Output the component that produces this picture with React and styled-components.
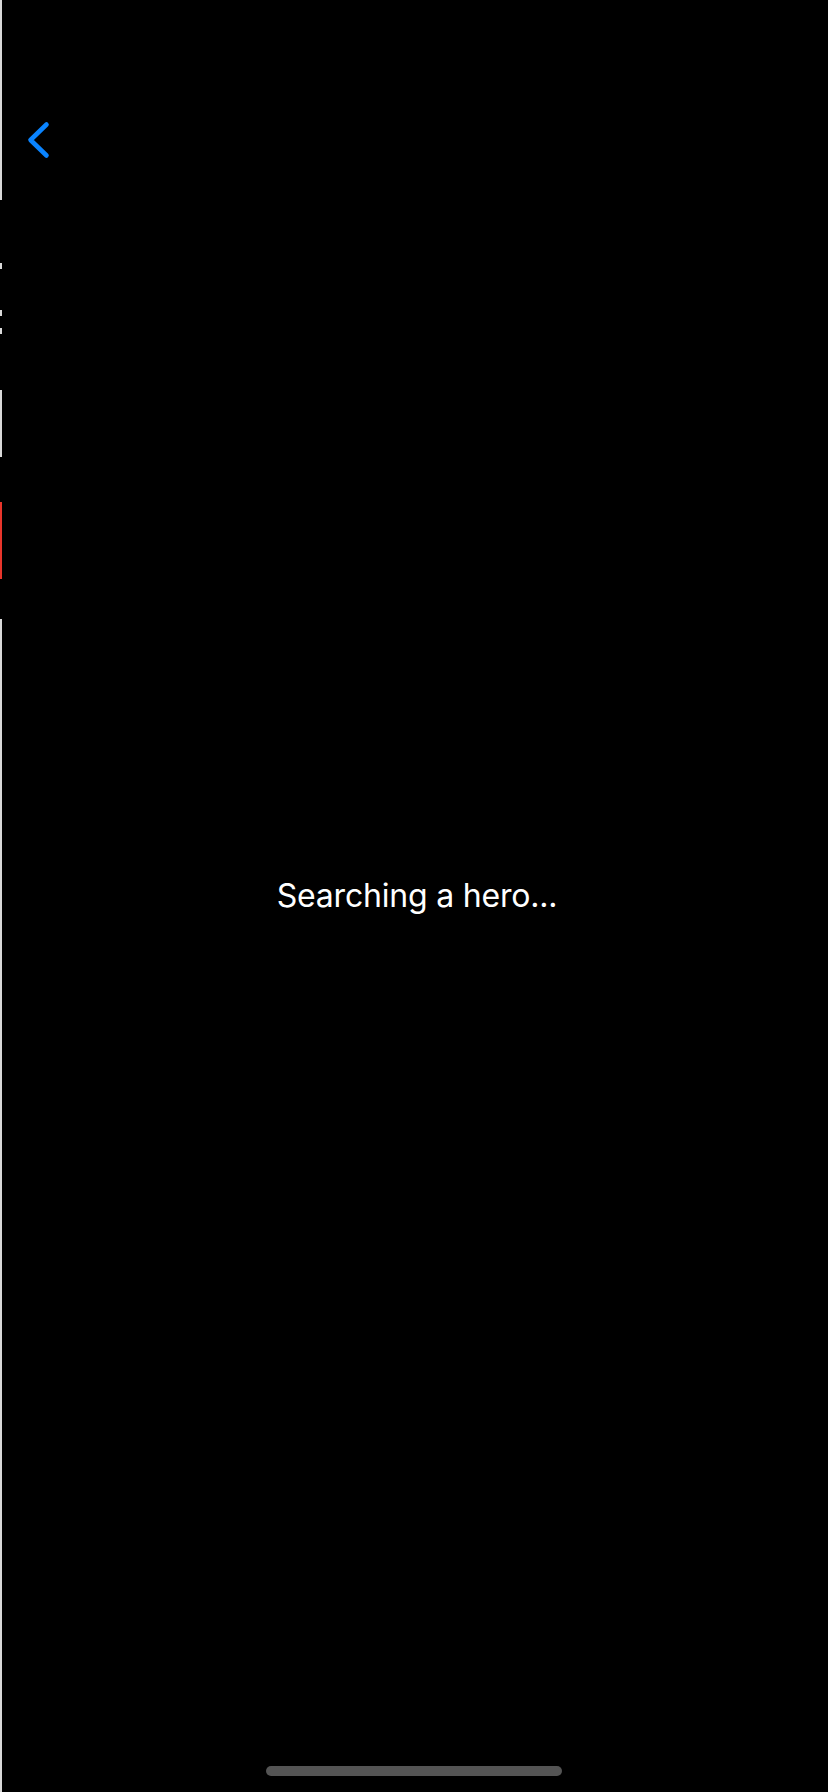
import React from "react";
import styled, { createGlobalStyle } from "styled-components";

const GlobalStyle = createGlobalStyle`
  html, body {
    margin: 0;
    padding: 0;
    background: #000;
  }
  #root {
    min-height: 1792px;
  }
`;

const Screen = styled.div`
  display: flex;
  flex-direction: row;
  width: 828px;
  height: 1792px;
  background: #000;
  overflow: hidden;
`;

const EdgeStrip = styled.div`
  display: flex;
  flex-direction: column;
  width: 2px;
  flex: 0 0 2px;
  height: 100%;
`;

const EdgeSegment = styled.div`
  flex: ${(p) => (p.$fill ? "1 1 auto" : `0 0 ${p.$h}px`)};
  background: ${(p) => p.$color};
`;

const Content = styled.div`
  flex: 1;
  display: grid;
  grid-template-rows: 176px 1fr 176px;
  min-width: 0;
`;

const NavBar = styled.div`
  display: flex;
  align-items: flex-start;
  padding-top: 120px;
  padding-left: 22px;
`;

const BackButton = styled.button`
  display: flex;
  align-items: center;
  justify-content: center;
  padding: 0;
  margin: 0;
  border: none;
  background: transparent;
  width: 28px;
  height: 40px;
  cursor: pointer;
`;

const Main = styled.main`
  display: flex;
  align-items: center;
  justify-content: center;
  margin-left: -2px;
`;

const Status = styled.p`
  margin: 0;
  color: #fff;
  font-family: Inter, "Noto Sans", "Liberation Sans", sans-serif;
  font-size: 32px;
  font-weight: 400;
  letter-spacing: -0.2px;
  line-height: 40px;
  transform: translateX(3px);
`;

const Footer = styled.div`
  display: flex;
  align-items: flex-end;
  justify-content: center;
  padding-bottom: 16px;
  margin-left: -2px;
`;

const HomeIndicator = styled.div`
  width: 296px;
  height: 10px;
  border-radius: 5px;
  background: #545454;
`;

const WHITE = "#d9d9d9";
const BLACK = "#000";
const RED = "#e8352b";

const segments = [
  [200, WHITE],
  [63, BLACK],
  [6, WHITE],
  [41, BLACK],
  [6, WHITE],
  [12, BLACK],
  [6, WHITE],
  [56, BLACK],
  [67, WHITE],
  [45, BLACK],
  [77, RED],
  [40, BLACK],
];

function ChevronLeft() {
  return (
    <svg width="28" height="40" viewBox="0 0 28 40" fill="none">
      <path
        d="M22.5 4.5 L6.5 20 L22.5 35.5"
        stroke="#0a84ff"
        strokeWidth="4.6"
        strokeLinecap="round"
        strokeLinejoin="round"
      />
    </svg>
  );
}

export default function App() {
  return (
    <>
      <GlobalStyle />
      <Screen>
        <EdgeStrip>
          {segments.map(([h, c], i) => (
            <EdgeSegment key={i} $h={h} $color={c} />
          ))}
          <EdgeSegment $fill $color={WHITE} />
        </EdgeStrip>
        <Content>
          <NavBar>
            <BackButton aria-label="Back">
              <ChevronLeft />
            </BackButton>
          </NavBar>
          <Main>
            <Status>Searching a hero...</Status>
          </Main>
          <Footer>
            <HomeIndicator />
          </Footer>
        </Content>
      </Screen>
    </>
  );
}
